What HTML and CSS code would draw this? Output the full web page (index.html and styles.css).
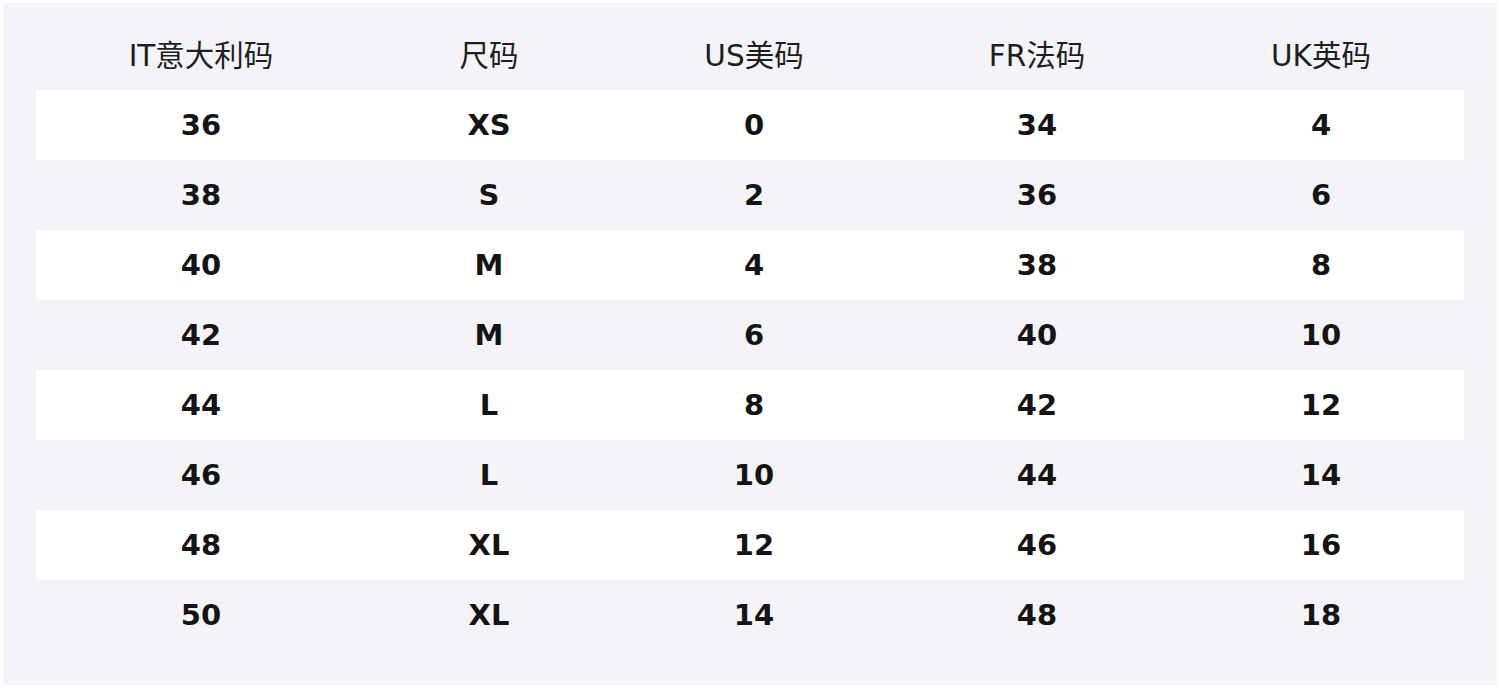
FILE: index.html
```html
<!DOCTYPE html>
<html lang="zh">
<head>
<meta charset="utf-8">
<link rel="stylesheet" href="styles.css">
</head>
<body>
<div class="panel">
  <table class="sizes">
    <colgroup>
      <col class="c1"><col class="c2"><col class="c3"><col class="c4"><col class="c5">
    </colgroup>
    <thead>
      <tr><th>IT意大利码</th><th>尺码</th><th>US美码</th><th>FR法码</th><th>UK英码</th></tr>
    </thead>
    <tbody>
      <tr><td>36</td><td>XS</td><td>0</td><td>34</td><td>4</td></tr>
      <tr><td>38</td><td>S</td><td>2</td><td>36</td><td>6</td></tr>
      <tr><td>40</td><td>M</td><td>4</td><td>38</td><td>8</td></tr>
      <tr><td>42</td><td>M</td><td>6</td><td>40</td><td>10</td></tr>
      <tr><td>44</td><td>L</td><td>8</td><td>42</td><td>12</td></tr>
      <tr><td>46</td><td>L</td><td>10</td><td>44</td><td>14</td></tr>
      <tr><td>48</td><td>XL</td><td>12</td><td>46</td><td>16</td></tr>
      <tr><td>50</td><td>XL</td><td>14</td><td>48</td><td>18</td></tr>
    </tbody>
  </table>
</div>
</body>
</html>
```
FILE: styles.css
```css
html, body {
  margin: 0;
  padding: 0;
  background: #ffffff;
}
body {
  padding: 3px;
  font-family: "DejaVu Sans", "Noto Sans CJK SC", sans-serif;
  color: #161616;
}
.panel {
  background: #f4f4f8;
  width: 1494px;
  height: 682px;
  box-sizing: border-box;
  padding: 17px 33px 0 33px;
}
.sizes {
  width: 1428px;
  border-collapse: collapse;
  table-layout: fixed;
}
.c1 { width: 330px; }
.c2 { width: 246px; }
.c3 { width: 284px; }
.c4 { width: 282px; }
.c5 { width: 286px; }
.sizes th {
  font-weight: normal;
  font-size: 29.5px;
  height: 66px;
  padding: 0 0 4px 0;
  text-align: center;
  color: #1e1e1e;
}
.sizes td {
  font-weight: bold;
  font-size: 29px;
  height: 70px;
  padding: 0;
  text-align: center;
  color: #141414;
}
.sizes tbody tr:nth-child(odd) {
  background: #ffffff;
}
```
